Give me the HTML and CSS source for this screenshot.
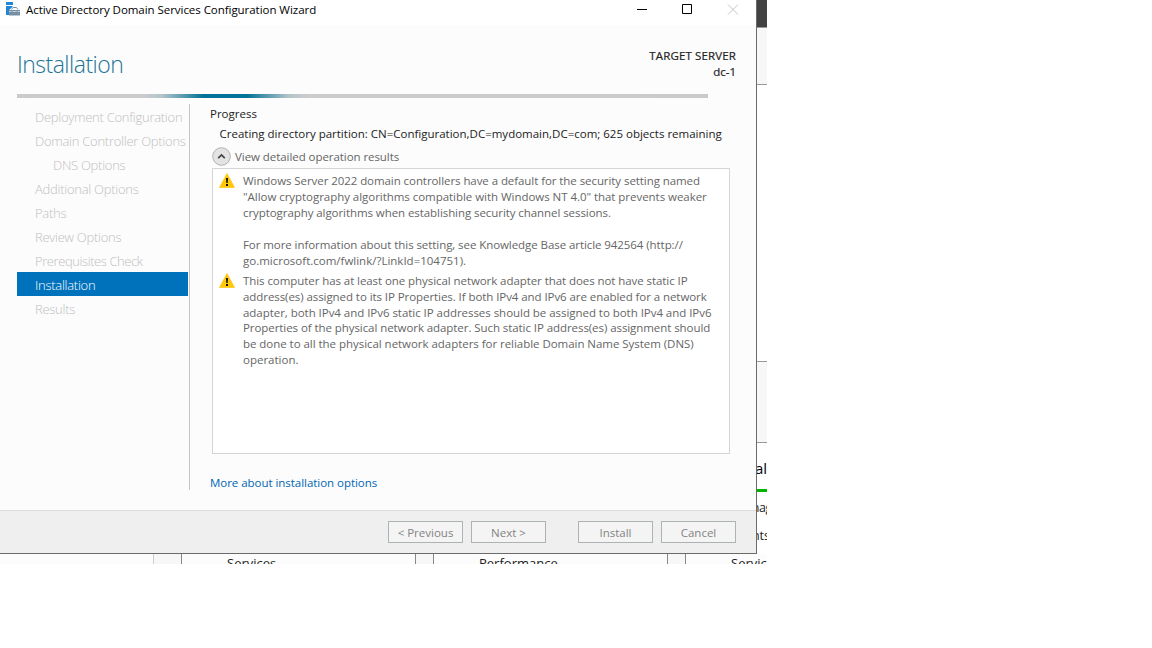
FILE: index.html
```html
<!DOCTYPE html>
<html lang="en">
<head>
<meta charset="utf-8">
<title>Active Directory Domain Services Configuration Wizard</title>
<link rel="stylesheet" href="styles.css">
</head>
<body>
<div class="desktop">
  <main class="wizard">
    <header class="titlebar">
      <svg class="app-icon" width="15" height="15" viewBox="0 0 15 15">
        <path d="M0 0h7v3H0zM0 4h6.500v1L3 8v5H0z" fill="#1f86d8"/>
        <path d="M5.500 7.500L7 5.500h3.500L12 7.500" fill="none" stroke="#7890a3"/>
        <path d="M3 8h11v5.500H3z" fill="#7890a3"/>
        <path d="M3 9.500h2.500M6.500 9.500h4M11.500 9.500H14" stroke="#d5dde2" stroke-width=".8"/>
      </svg>
      <span class="title">Active Directory Domain Services Configuration Wizard</span>
      <svg class="caption" width="104" height="12" viewBox="0 0 104 12" fill="none">
        <path d="M0 5.500h10" stroke="#000"/>
        <path d="M45.500.500h9v9h-9z" stroke="#000"/>
        <path d="M91 .500l10 10M101 .500l-10 10" stroke="#c4c4c4"/>
      </svg>
    </header>
    <section class="heading">
      <h1>Installation</h1>
      <div class="target"><span class="target-label">TARGET SERVER</span><span>dc-1</span></div>
    </section>
    <div class="progressbar"></div>
    <div class="content">
      <nav class="steps">
        <div class="step">Deployment Configuration</div>
        <div class="step">Domain Controller Options</div>
        <div class="step sub">DNS Options</div>
        <div class="step">Additional Options</div>
        <div class="step">Paths</div>
        <div class="step">Review Options</div>
        <div class="step tight">Prerequisites Check</div>
        <div class="step active">Installation</div>
        <div class="step">Results</div>
      </nav>
      <section class="details">
        <div class="label">Progress</div>
        <div class="status">Creating directory partition: CN=Configuration,DC=mydomain,DC=com; 625 objects remaining</div>
        <div class="expander">
          <svg width="19" height="19" viewBox="0 0 19 19" fill="none"><circle cx="9.500" cy="9.500" r="8.800" fill="#e3e3e3" stroke="#b2b2b2"/><path d="M6.200 11.200l3.300-3.300 3.300 3.300" stroke="#444" stroke-width="1.700"/></svg>
          <span>View detailed operation results</span>
        </div>
        <div class="results">
          <article class="message">
            <svg class="warn" width="16" height="15" viewBox="0 0 16 15"><path d="M8 .300L15.800 14.700H.200z" fill="#ffc60a" stroke="#ffc60a" stroke-width=".4"/><path d="M7 5h2l-.300 5H7.300zM7 11h2v2H7z" fill="#111"/></svg>
            <div class="lines">
              <div>Windows Server 2022 domain controllers have a default for the security setting named</div>
              <div class="loose">"Allow cryptography algorithms compatible with Windows NT 4.0" that prevents weaker</div>
              <div>cryptography algorithms when establishing security channel sessions.</div>
              <div>&nbsp;</div>
              <div>For more information about this setting, see Knowledge Base article 942564 (http://</div>
              <div class="loosest">go.microsoft.com/fwlink/?LinkId=104751).</div>
            </div>
          </article>
          <article class="message">
            <svg class="warn" width="16" height="15" viewBox="0 0 16 15"><path d="M8 .300L15.800 14.700H.200z" fill="#ffc60a" stroke="#ffc60a" stroke-width=".4"/><path d="M7 5h2l-.300 5H7.300zM7 11h2v2H7z" fill="#111"/></svg>
            <div class="lines second">
              <div>This computer has at least one physical network adapter that does not have static IP</div>
              <div>address(es) assigned to its IP Properties. If both IPv4 and IPv6 are enabled for a network</div>
              <div class="loose">adapter, both IPv4 and IPv6 static IP addresses should be assigned to both IPv4 and IPv6</div>
              <div>Properties of the physical network adapter. Such static IP address(es) assignment should</div>
              <div class="loose">be done to all the physical network adapters for reliable Domain Name System (DNS)</div>
              <div class="loosest">operation.</div>
            </div>
          </article>
        </div>
        <a class="more">More about installation options</a>
      </section>
    </div>
    <footer class="actions">
      <button>&lt; Previous</button>
      <button>Next &gt;</button>
      <button class="gap">Install</button>
      <button>Cancel</button>
    </footer>
  </main>
  <aside class="edge">
    <div class="edge-dark"></div>
    <div class="edge-band top"></div>
    <div class="edge-blank"></div>
    <div class="edge-band mid"></div>
    <div class="edge-text big"><span>al</span></div>
    <div class="edge-green"></div>
    <div class="edge-text"><span class="nag">nag</span></div>
    <div class="edge-text"><span class="nts">nts</span></div>
  </aside>
  <div class="tiles">
    <div class="tile first"></div>
    <div class="tile">Services</div>
    <div class="tile">Performance</div>
    <div class="tile last">Services</div>
  </div>
</div>
</body>
</html>
```
FILE: styles.css
```css
* { box-sizing: border-box; }
body { margin: 0; background: #fff; font-family: "Open Sans", "Noto Sans", sans-serif; font-size: 11.5px; color: #222; }
.desktop { width: 767px; height: 564px; display: grid; grid-template-columns: 757px 10px; grid-template-rows: 554px 10px; overflow: hidden; white-space: nowrap; }
.wizard { display: flex; flex-direction: column; background: #fcfcfc; border-right: 1px solid #6b6b6b; border-bottom: 1px solid #6b6b6b; }
.titlebar { height: 25px; background: #fff; display: flex; align-items: flex-start; padding: 2px 15px 0 6px; }
.title { margin-left: 5px; color: #000; line-height: 16px; letter-spacing: -.045px; }
.caption { margin: 2px 0 0 auto; }
.heading { height: 69px; display: flex; justify-content: space-between; padding: 22px 20px 0 17px; }
h1 { margin: 0; font-size: 23px; line-height: 35px; font-weight: 300; color: #1c7596; letter-spacing: -.52px; }
.target { display: flex; flex-direction: column; align-items: flex-end; line-height: 16px; padding-top: 1px; font-weight: 500; -webkit-text-stroke: .2px #222; }
.target-label { letter-spacing: .14px; }
.progressbar { width: 691px; height: 4px; margin-left: 17px; background: linear-gradient(to right, #cacaca 0, #cccccc 125px, #b4c4ca 145px, #007396 186px, #007396 230px, #b4c4ca 272px, #cccccc 292px, #cacaca 100%); }
.content { height: 412px; display: flex; }
.steps { width: 190px; height: 386px; margin-top: 6px; padding: 0 1px 0 17px; border-right: 1px solid #c6c6c6; }
.step { height: 24px; line-height: 26px; padding-left: 18px; font-size: 13px; font-weight: 300; color: #c0c0c0; letter-spacing: -.27px; }
.tight { letter-spacing: -.42px; }
.sub { padding-left: 36px; }
.active { background: #0072bc; color: #fff; }
.details { padding: 8px 0 0 20px; }
.label { line-height: 16px; }
.status { line-height: 16px; padding-left: 9.500px; margin-top: 4px; }
.expander { display: flex; align-items: center; gap: 4px; height: 20px; margin: 4px 0 0 2px; color: #666; letter-spacing: -.06px; }
.results { width: 518px; height: 286px; margin: 2px 0 0 2px; border: 1px solid #d5d5d5; background: #fff; padding: 4px 0 0 6px; color: #666; letter-spacing: -.07px; }
.loose { letter-spacing: -.04px; }
.loosest { letter-spacing: 0; }
.message { display: flex; align-items: flex-start; gap: 8px; margin-bottom: 4px; line-height: 16px; }
.second { line-height: 15.800px; }
.more { display: block; margin-top: 20px; line-height: 18px; color: #0066b3; letter-spacing: -.04px; }
.actions { flex: 1; display: flex; align-items: flex-start; justify-content: flex-end; gap: 8px; border-top: 1px solid #dcdcdc; background: #efefef; padding: 10px 20px 0 0; }
button { width: 75px; height: 22px; padding: 0; border: 1px solid #adb2b5; background: #f4f4f4; color: #838383; font: inherit; }
.gap { margin-left: 24px; }
.edge { display: flex; flex-direction: column; overflow: hidden; background: #fff; }
.edge-dark { height: 27px; background: #424242; }
.edge-band { background: #f7f7f7; border-top: 1px solid #999; border-bottom: 1px solid #999; }
.top { height: 58px; }
.edge-blank { height: 276px; }
.mid { height: 82px; }
.edge-text { display: flex; justify-content: flex-end; height: 28px; line-height: 30px; font-size: 12.500px; color: #222; }
.big { height: 46px; line-height: 50px; font-size: 15px; color: #000; }
.edge-green { height: 3px; background: #00b800; margin-bottom: 1px; }
.nag { margin-right: -5px; letter-spacing: -.4px; }
.nts { margin-right: -3px; }
.tiles { grid-column: 1 / 3; display: flex; gap: 17px; background: #f7f7f7; overflow: hidden; font-size: 13px; line-height: 19px; }
.tile { width: 235px; flex: none; height: 20px; padding-left: 45px; background: #fcfcfc; border-left: 1px solid #888; border-right: 1px solid #888; }
.first { width: 154px; margin-right: 10px; border-left: 0; border-right-color: #ccc; }
```
